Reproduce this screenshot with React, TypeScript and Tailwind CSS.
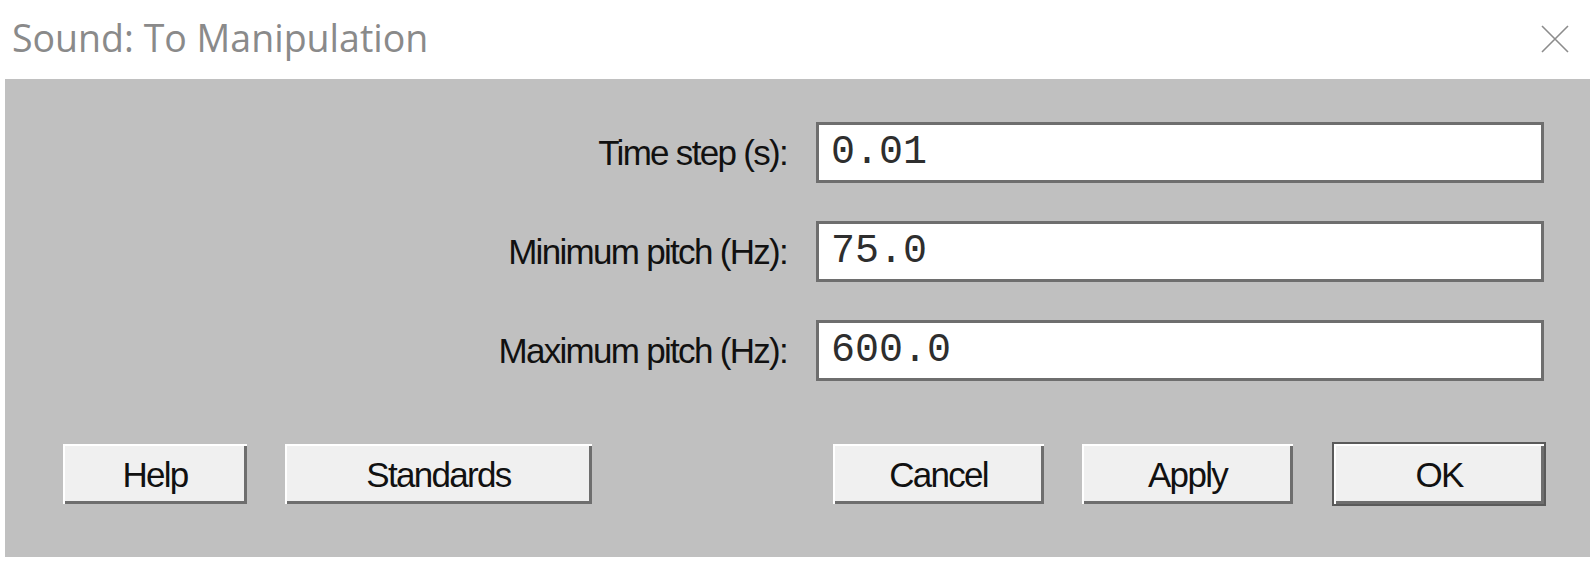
import React from "react";

const labelFont = { fontFamily: '"Liberation Sans", Arial, sans-serif' };

const fields = [
  { label: "Time step (s):", value: "0.01" },
  { label: "Minimum pitch (Hz):", value: "75.0" },
  { label: "Maximum pitch (Hz):", value: "600.0" },
];

function Field({ label, value }: { label: string; value: string }) {
  return (
    <div className="flex items-center justify-end">
      <span className="text-[35px] leading-none tracking-[-1.7px] text-[#111]" style={labelFont}>
        {label}
      </span>
      <div className="ml-[29px] flex h-[61px] w-[728px] items-center border-[3px] border-[#6e6e6e] bg-white pl-[12px]">
        <span className="font-['Liberation_Mono',monospace] text-[40px] leading-none text-[#2e2e2e]">
          {value}
        </span>
      </div>
    </div>
  );
}

function WinButton({
  children,
  className = "",
  isDefault = false,
}: {
  children: React.ReactNode;
  className?: string;
  isDefault?: boolean;
}) {
  return (
    <button
      className={`flex h-[60px] items-center justify-center bg-[#f0f0f0] text-[35px] leading-none tracking-[-1.7px] text-[#111] shadow-[inset_2px_2px_0_#ffffff,inset_-3px_-3px_0_#6e6e6e] ${
        isDefault ? "outline-[2px] outline-solid outline-[#5a5a5a]" : ""
      } ${className}`}
      style={labelFont}
    >
      {children}
    </button>
  );
}

export default function App() {
  return (
    <div className="flex h-[564px] w-[1595px] flex-col bg-white">
      {/* Title bar */}
      <div className="flex h-[79px] items-center justify-between pb-[4px] pl-[12px] pr-[26px]">
        <span className="font-['Open_Sans',sans-serif] text-[37.5px] leading-none text-[#8a8a8a]">
          Sound: To Manipulation
        </span>
        <svg width="28" height="28" viewBox="0 0 28 28" className="mt-[2px]">
          <path d="M1 1 L27 27 M27 1 L1 27" stroke="#8c8c8c" strokeWidth="1.6" fill="none" />
        </svg>
      </div>

      {/* Form body */}
      <div className="mx-[5px] flex h-[478px] flex-col bg-[#c0c0c0] pl-[58px] pr-[46px] pt-[43px]">
        <div className="flex flex-col gap-[38px]">
          {fields.map((f) => (
            <Field key={f.label} label={f.label} value={f.value} />
          ))}
        </div>

        <div className="mt-[63px] flex items-center">
          <WinButton className="w-[184px]">Help</WinButton>
          <WinButton className="ml-[38px] w-[307px]">Standards</WinButton>
          <div className="flex-1" />
          <WinButton className="w-[211px]">Cancel</WinButton>
          <WinButton className="ml-[38px] w-[211px]">Apply</WinButton>
          <WinButton className="ml-[41px] w-[210px]" isDefault>
            OK
          </WinButton>
        </div>
      </div>
    </div>
  );
}
